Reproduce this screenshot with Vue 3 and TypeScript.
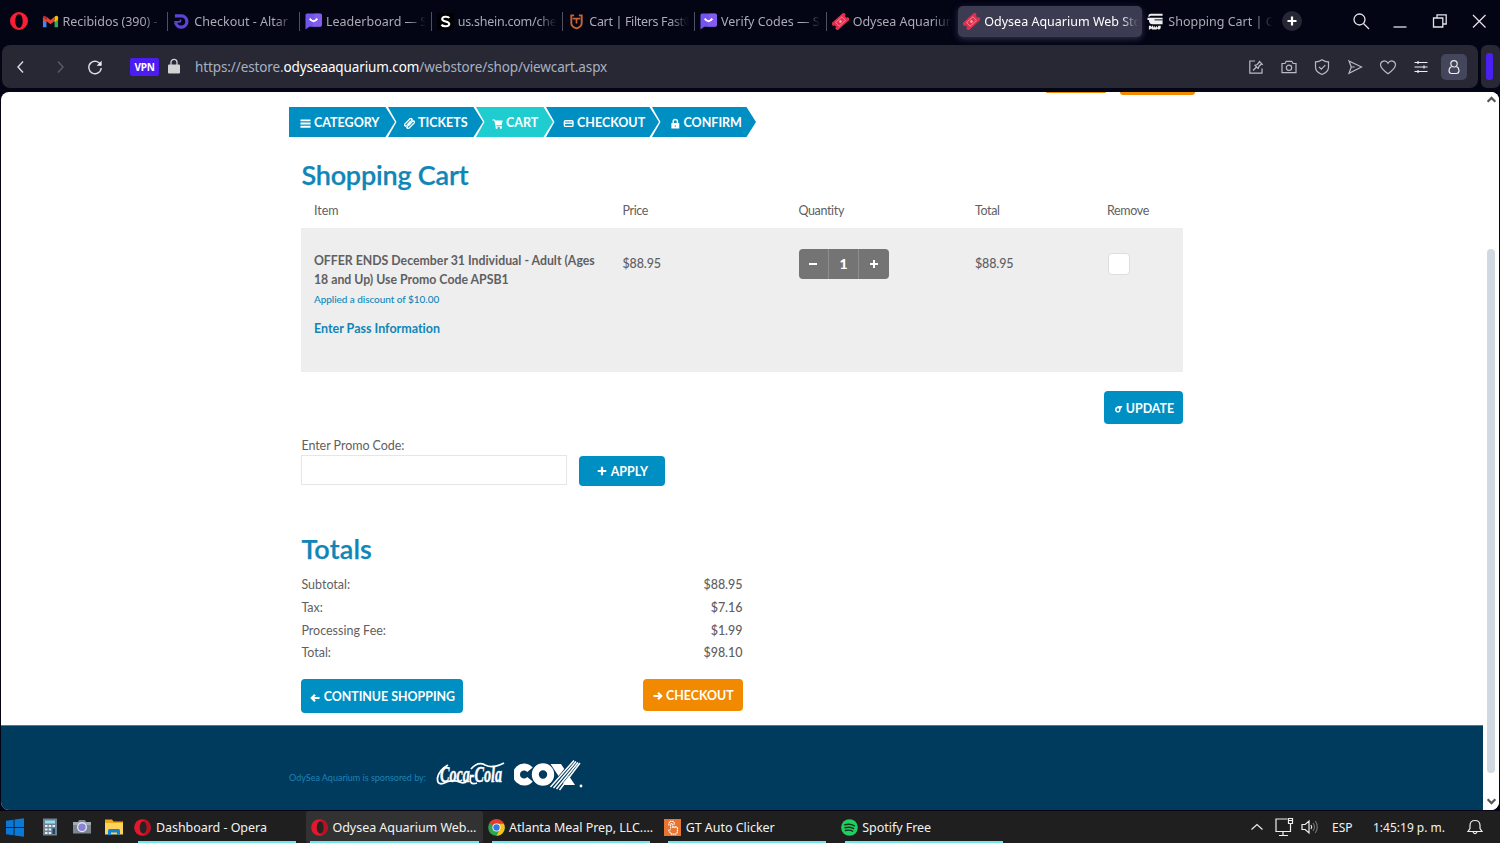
<script setup lang="ts">
interface Tab { icon: string; title: string; active?: boolean; cls?: string }
interface Step { label: string; icon: string; cls: string }
interface Task { icon: string; title: string; cls: string; active?: boolean }

const tabs: Tab[] = [
  { icon: 'gmail', title: 'Recibidos (390) -', cls: 't1' },
  { icon: 'altar', title: 'Checkout - Altar', cls: 't2' },
  { icon: 'chat', title: 'Leaderboard — S', cls: 't3' },
  { icon: 'shein', title: 'us.shein.com/che', cls: 't4' },
  { icon: 'filters', title: 'Cart | Filters Fast®', cls: 't5' },
  { icon: 'chat', title: 'Verify Codes — S', cls: 't6' },
  { icon: 'ticket', title: 'Odysea Aquarium', cls: 't7' },
  { icon: 'ticket', title: 'Odysea Aquarium Web Sto', active: true, cls: 't8' },
  { icon: 'raw', title: 'Shopping Cart | G', cls: 't9' },
]

const steps: Step[] = [
  { label: 'CATEGORY', icon: 'menu', cls: 's1' },
  { label: 'TICKETS', icon: 'ticket', cls: 's2' },
  { label: 'CART', icon: 'cart', cls: 's3' },
  { label: 'CHECKOUT', icon: 'card', cls: 's4' },
  { label: 'CONFIRM', icon: 'lock', cls: 's5' },
]

const totals = [
  { label: 'Subtotal:', value: '$88.95' },
  { label: 'Tax:', value: '$7.16' },
  { label: 'Processing Fee:', value: '$1.99' },
  { label: 'Total:', value: '$98.10' },
]

const tasks: Task[] = [
  { icon: 'opera', title: 'Dashboard - Opera', cls: 'k1' },
  { icon: 'opera', title: 'Odysea Aquarium Web...', cls: 'k2', active: true },
  { icon: 'chrome', title: 'Atlanta Meal Prep, LLC....', cls: 'k3' },
  { icon: 'click', title: 'GT Auto Clicker', cls: 'k4' },
  { icon: 'spotify', title: 'Spotify Free', cls: 'k5' },
]
</script>

<template>
  <div class="screen">
    <header class="tabstrip">
      <svg class="opera-menu" viewBox="0 0 18 18"><path fill-rule="evenodd" fill="#fa1e35" d="M9 0a9 9 0 1 0 0 18A9 9 0 0 0 9 0Zm0 2.200c2.200 0 3.700 2.900 3.700 6.800s-1.500 6.800-3.700 6.800S5.300 12.900 5.300 9 6.800 2.200 9 2.200Z" /></svg>
      <div v-for="(t, i) in tabs" :key="i" class="tab" :class="[t.cls, { active: t.active }]">
        <svg class="fav" viewBox="0 0 18 18">
          <g v-if="t.icon === 'gmail'">
            <path d="M1 4v11h3.700V8z" fill="#4285f4" /><path d="M17 4v11h-3.700V8z" fill="#34a853" />
            <path d="M1 4.500 4.700 7.500V4L3 3Q1 3 1 4.500Z" fill="#c5221f" /><path d="M4.700 4 9 7.500 13.300 4v4.500L9 12 4.700 8.500ZM1 4.500 4.700 7.300v3L1 7.300Z" fill="#ea4335" />
            <path d="M13.300 4 15 3q2 0 2 1.500V7l-3.700 2.700Z" fill="#fbbc04" />
          </g>
          <g v-else-if="t.icon === 'altar'" fill="none" stroke="#5a45d8" stroke-width="3.400">
            <path d="M2 3h7a6 6 0 1 1-6.200 7.200" /><path d="M8 7v1q0 1.500-1.500 1.500H1.300" stroke-width="1.800" />
          </g>
          <g v-else-if="t.icon === 'chat'">
            <path d="M2 .5h14q2 0 2 2v10q0 2-2 2H4.500L.5 17.500V2.500q0-2 1.500-2Z" fill="#7354ee" />
            <path d="M10 .5h6q2 0 2 2v10q0 2-2 2H8Z" fill="#8d61ee" opacity=".6" />
            <path d="M5 6q4 5.500 8 0" stroke="#fff" stroke-width="2" fill="none" />
          </g>
          <g v-else-if="t.icon === 'shein'">
            <rect width="18" height="18" fill="#000" /><path d="M13 5.300C12 3.500 5.500 3.200 5.500 6.300c0 3.500 7.500 1.700 7.500 5.300 0 3-6.700 3.300-8.200.7" fill="none" stroke="#fff" stroke-width="2.200" />
          </g>
          <g v-else-if="t.icon === 'filters'" fill="none" stroke="#c86432" stroke-width="2">
            <path d="M6.500 2.500H3.500v8.300Q3.500 14.500 9 16.300q5.500-1.800 5.500-5.500V2.500h-3" /><path d="M9 5.500V11M5 6h8" stroke-width="1.800" />
          </g>
          <g v-else-if="t.icon === 'ticket'" transform="rotate(-42 9 9)">
            <path d="M0 4h18v3.300a1.700 1.700 0 0 0 0 3.400V14H0v-3.300a1.700 1.700 0 0 0 0-3.400Z" fill="#e02f4e" />
            <path d="M4.500 6.300h9v5.400h-9z" fill="none" stroke="#f595a3" stroke-width=".8" /><circle cx="9" cy="9" r="1.400" fill="#f7a2ad" />
          </g>
          <g v-else fill="#eee">
            <path d="M4 .8h12.500v2H4Q2.500 3 2.500 4H1.300Q1.500 1 4 .8ZM.5 5h16v7H6Q2 12 2 7.500H.5Z" />
            <path d="M8 6.800h8.500v1H8z" fill="#030414" />
            <path d="M2 17.500v-4h2l.6 1.500.7-1.500h1l.9 2.200.9-2.200 1 2.200 1-2.200 1 2.200.9-2.200h2.500v2.700l-1.500 1.300h-1l-.9-1.200-.9 1.200H5.500l-1-1.200L3 17.500Z" />
          </g>
        </svg>
        <span class="tab-title">{{ t.title }}</span>
      </div>
      <div class="newtab"><svg viewBox="0 0 20 20"><path d="M10 5.500v9M5.500 10h9" stroke="#fff" stroke-width="2.200" /></svg></div>
      <svg class="win search" viewBox="0 0 18 18"><circle cx="7.500" cy="7.500" r="5.500" /><path d="m11.500 11.500 5.500 5.500" /></svg>
      <svg class="win min" viewBox="0 0 18 18"><path d="M2.500 15h13" /></svg>
      <svg class="win restore" viewBox="0 0 18 18"><path d="M2.500 6h9.300v9H2.500zM6 6V2.800h9.200V12H12" /></svg>
      <svg class="win close" viewBox="0 0 18 18"><path d="m3 3 12.500 12.500M15.500 3 3 15.500" /></svg>
    </header>

    <div class="toolrow">
      <div class="toolbar">
        <svg class="nav back" viewBox="0 0 18 18"><path d="m11 3.500-5 5.500 5 5.500" /></svg>
        <svg class="nav fwd" viewBox="0 0 18 18"><path d="m6 3.500 5 5.500-5 5.500" /></svg>
        <svg class="nav reload" viewBox="0 0 18 18"><path d="M14.800 7.200A6.200 6.200 0 1 0 15.200 10" /><path d="M15.600 2.800v5h-5z" fill="#f0f0f4" stroke="none" /></svg>
        <span class="vpn">VPN</span>
        <svg class="padlock" viewBox="0 0 12 16"><path d="M3 7V4.300a3 3 0 0 1 6 0V7" fill="none" stroke="#d2d2d4" stroke-width="1.300" /><rect y="6.500" width="12" height="9" rx="1" fill="#d2d2d4" /></svg>
        <span class="url">https://estore.<b>odyseaaquarium.com</b>/webstore/shop/viewcart.aspx</span>
        <div class="actions">
          <svg viewBox="0 0 18 18"><path d="M8 3H2.800v12.200H15V10.500M6 12.500 9.500 9M7.500 6.800l4 4M8.200 7.200l2-.7 2.300-2.500M11.300 10.200l.7-2L14.500 6M12 3 15.800 6.800" /></svg>
          <svg viewBox="0 0 18 18"><path d="M2 5.500h3l1.200-2.200h5.600L13 5.500h3v9.200H2z" /><circle cx="9" cy="9.800" r="2.700" /></svg>
          <svg viewBox="0 0 18 18"><path d="M9 1.700Q12.500 4 15.500 3.800v5.400q0 4.500-6.500 7.300-6.500-2.800-6.500-7.300V3.800Q5.500 4 9 1.700ZM6 8.800l2.300 2.300 4-4" /></svg>
          <svg viewBox="0 0 18 18"><path d="m3 3 12.500 6L3 15.200 5.300 9ZM5.300 9h3.500" /></svg>
          <svg viewBox="0 0 18 18"><path d="M9 15.800C4.500 12.500 1.500 10 1.500 6.800c0-4.200 5.500-5.300 7.500-1.500 2-3.800 7.500-2.700 7.500 1.500 0 3.200-3 5.700-7.500 9Z" /></svg>
          <svg class="bright" viewBox="0 0 18 18"><path d="M2.500 4.500h13M2.500 9h13M2.500 13.500h13M6 3v3M12 7.500v3M6 12v3" /></svg>
          <span class="profile"><svg class="bright" viewBox="0 0 18 18"><circle cx="9" cy="5.800" r="3.200" /><path d="M6.500 8.500Q4 9.800 4 12.500q0 3 2.500 3h5q2.500 0 2.500-3 0-2.700-2.500-4" /></svg></span>
        </div>
      </div>
      <div class="side"><i></i></div>
    </div>

    <div class="viewport">
      <div class="page">
        <main class="content">
          <div class="cut cut-a"></div>
          <div class="cut cut-b"></div>
          <ol class="steps">
            <li v-for="s in steps" :key="s.label" :class="s.cls">
              <svg viewBox="0 0 12 12">
                <path v-if="s.icon === 'menu'" d="M.5 2.500h11M.5 6h11M.5 9.500h11" stroke="#fff" stroke-width="2" />
                <g v-else-if="s.icon === 'ticket'" fill="none" stroke="#fff" stroke-width="1.500" transform="rotate(-45 6 6)"><path d="M.8 2.800h10.400v2a1.200 1.200 0 0 0 0 2.400v2H.8v-2a1.200 1.200 0 0 0 0-2.400ZM3.800 5.200h4.400v1.600H3.800z" /></g>
                <g v-else-if="s.icon === 'cart'" fill="#fff"><path d="M.5 1.500h2.700l.5 1.300h8L10.500 7.500H4.800L5 8.500h5.800v1H4L2.500 2.800h-2Z" /><circle cx="5" cy="10.700" r="1.200" /><circle cx="9.700" cy="10.700" r="1.200" /></g>
                <path v-else-if="s.icon === 'card'" d="M2.500 3h7.400q1 0 1 1v4.200q0 1-1 1H2.500q-1 0-1-1V4q0-1 1-1ZM1.500 5.700h9.400" stroke="#fff" stroke-width="1.500" fill="none" />
                <g v-else><path d="M3.500 6V4a2.300 2.300 0 0 1 4.600 0v2" fill="none" stroke="#fff" stroke-width="1.600" /><path d="M1.500 5.500h8.600v6H1.500z" fill="#fff" /><path d="M5.300 8h1v1.500h-1z" fill="#008fc3" /></g>
              </svg>
              <span>{{ s.label }}</span>
            </li>
          </ol>

          <h1>Shopping Cart</h1>
          <div class="grid head">
            <span>Item</span><span>Price</span><span>Quantity</span><span>Total</span><span>Remove</span>
          </div>
          <div class="grid item">
            <div class="desc">
              <strong><span>OFFER ENDS December 31 Individual - Adult (Ages</span><br /><span>18 and Up) Use Promo Code APSB1</span></strong>
              <small>Applied a discount of $10.00</small>
              <a>Enter Pass Information</a>
            </div>
            <span class="money">$88.95</span>
            <div class="qty">
              <button><svg viewBox="0 0 10 10"><path d="M1 5h8" /></svg></button><span>1</span><button><svg viewBox="0 0 10 10"><path d="M1 5h8M5 1v8" /></svg></button>
            </div>
            <span class="money">$88.95</span>
            <div class="check"></div>
          </div>
          <button class="btn update">
            <svg viewBox="0 0 10 10"><path d="M6.500 3.500H4.600a2 2.200 0 1 0 2.200 2.200V4.500M5.500 2.800h2.800L6.800 5Z" fill="none" stroke="#fff" stroke-width="1.400" /></svg><span>UPDATE</span>
          </button>

          <label class="promo-label">Enter Promo Code:</label>
          <div class="promo">
            <input type="text" />
            <button class="btn apply"><svg viewBox="0 0 10 10"><path d="M.7 5h8.600M5 .7v8.600" stroke="#fff" stroke-width="2.200" /></svg><span>APPLY</span></button>
          </div>

          <h2>Totals</h2>
          <dl>
            <div v-for="r in totals" :key="r.label"><dt>{{ r.label }}</dt><dd>{{ r.value }}</dd></div>
          </dl>
          <div class="buttons">
            <button class="btn cont"><svg viewBox="0 0 10 10"><path d="M9.500 5H2M5 1.800 1.800 5 5 8.200" fill="none" stroke="#fff" stroke-width="2.200" /></svg><span>CONTINUE SHOPPING</span></button>
            <button class="btn out"><svg viewBox="0 0 10 10"><path d="M.5 5H8M5 1.800 8.200 5 5 8.200" fill="none" stroke="#fff" stroke-width="2.200" /></svg><span>CHECKOUT</span></button>
          </div>
        </main>
        <footer>
          <span class="sponsor">OdySea Aquarium is sponsored by:</span>
          <svg class="coke" viewBox="0 0 70 34">
            <text x="4" y="24" textLength="62" lengthAdjust="spacingAndGlyphs" font-family="Liberation Serif, serif" font-style="italic" font-weight="700" font-size="24" fill="#fff" stroke="#fff" stroke-width=".5">Coca-Cola</text>
            <path d="M12 7Q3 12 1.500 20q-.5 7 5.500 5.500 8-4.500 15-2 6 3 9-.5M35 11q7-8 14-4 8 4 19-2M35 17q-3 11 6 8" fill="none" stroke="#fff" stroke-width="1.800" />
          </svg>
          <svg class="cox" viewBox="0 0 70 34">
            <g fill="none" stroke="#fff" stroke-width="7"><path d="M16 11.700A7.600 7.600 0 1 0 16 21.300" /><circle cx="29" cy="16.500" r="7.700" /></g>
            <path d="M36.500 6H47l14 21H50.500z" fill="#fff" />
            <path d="M39 31 62 3" stroke="#003a5d" stroke-width="8" />
            <path d="M36.500 29 60 2.500M39.500 30 62 3.500M42.500 31 64 4.500M45.500 32 66 5" stroke="#fff" stroke-width="1.500" />
            <circle cx="67" cy="28" r="1.400" fill="#fff" />
          </svg>
        </footer>
      </div>
      <div class="scroll">
        <svg viewBox="0 0 10 8"><path d="M1.500 6 5 2.500 8.500 6" /></svg>
        <i></i>
        <svg viewBox="0 0 10 8"><path d="M1.500 2 5 5.500 8.500 2" /></svg>
      </div>
    </div>

    <nav class="taskbar">
      <svg class="start" viewBox="0 0 20 20"><path d="M.5 3 8.500 1.800V9.400H.5zM9.500 1.600 19.500.2V9.400H9.500zM.5 10.400h8v7.700L.5 17zM9.500 10.400h10v9.300l-10-1.400z" fill="#0a78d6" /></svg>
      <svg class="app a1" viewBox="0 0 18 18"><rect x="2" y=".5" width="14" height="17" fill="#71818e" /><path d="M4 2.500h10v3H4z" fill="#8ee0f2" /><path d="M4 7h2.500v2H4zM7.700 7h2.500v2H7.700zM11.500 7H14v2h-2.500zM4 10.500h2.500v2H4zM7.700 10.500h2.500v2H7.700zM4 14h2.500v2H4zM7.700 14h2.500v2H7.700z" fill="#e5eef3" /><path d="M11.500 10.500H14V16h-2.500z" fill="#124b78" /></svg>
      <svg class="app a2" viewBox="0 0 18 18"><path d="M0 4h5l1-2h6l1 2h5v11.500H0z" fill="#7d8790" /><path d="M0 4h18v3H0z" fill="#a3abb3" /><circle cx="9" cy="9.300" r="5" fill="#e5e9f0" /><circle cx="9" cy="9.300" r="3.700" fill="#8b83d8" /></svg>
      <svg class="app a3" viewBox="0 0 18 18"><path d="M0 1.500h7l1.500 2H18V16H0z" fill="#e9a91c" /><path d="M0 5h18v11.500H0z" fill="#ffd35b" /><path d="M3 17v-4.500Q3 11 4.500 11h9q1.500 0 1.500 1.500V17h-3v-2.500H6V17Z" fill="#1583d4" /></svg>
      <div v-for="k in tasks" :key="k.title" class="task" :class="[k.cls, { active: k.active }]">
        <svg viewBox="0 0 18 18">
          <g v-if="k.icon === 'opera'"><circle cx="9" cy="9" r="8.800" fill="#e4172e" /><path d="M11 .5a8.800 8.800 0 0 1 0 17Z" fill="#b51222" /><ellipse cx="9.700" cy="9" rx="3.600" ry="6.500" fill="#242424" /></g>
          <g v-else-if="k.icon === 'chrome'"><circle cx="9" cy="9" r="8.800" fill="#2ea44f" /><path d="M9 9 1.400 4.600A8.800 8.800 0 0 1 16.600 4.600Z" fill="#e33b2e" /><path d="M9 5h7.800A8.800 8.800 0 0 1 9 17.800L12.500 11Z" fill="#fbc116" /><circle cx="9" cy="9" r="4.300" fill="#fff" /><circle cx="9" cy="9" r="3.400" fill="#3578e5" /></g>
          <g v-else-if="k.icon === 'click'"><rect width="18" height="18" fill="#e87431" /><path d="M7 10V5.500q1.200-1.500 2.300 0V9h1.500v-.8q1.200-.5 1.700.5 1.700-.5 1.700 1V13q0 2.800-2.500 3H8L5 12.500q0-1.600 2-1M5.200 7V4.500L6.500 2.500h3.200L11 4.500V6" fill="none" stroke="#fff" stroke-width="1.200" stroke-dasharray="1.800 .5" /></g>
          <g v-else><circle cx="9" cy="9" r="8.800" fill="#1ed15e" /><path d="M3.800 6.200q5.700-1.600 10.500 1M4.200 9.300q5-1.400 9.200.9M4.700 12.200q4.200-1.100 7.600.7" fill="none" stroke="#1c3022" stroke-width="1.500" stroke-linecap="round" /></g>
        </svg>
        <span>{{ k.title }}</span>
      </div>
      <div class="tray">
        <svg class="y1" viewBox="0 0 14 14"><path d="m1.500 9.500 5.500-5 5.500 5" /></svg>
        <svg class="y2" viewBox="0 0 20 20"><path d="M13.500 2H2v12.500h14.500V9M9 14.500V18M5 18.500h9M14.500 1.500h4v5h-4zM15 3.500h3M16.500 6.500V9" /></svg>
        <svg class="y3" viewBox="0 0 18 18"><path d="M1 6.500h3.200L8 3v12l-3.800-3.500H1ZM10 7q1.500 2 0 4" /><path d="M12 5q3 4 0 8M14.300 3q4 6 0 12" opacity=".4" /></svg>
        <span class="lang">ESP</span>
        <span class="clock">1:45:19 p. m.</span>
        <svg class="y4" viewBox="0 0 18 18"><path d="M2 13.500h14L14 10.500V7.500Q14 2.500 9 2.500T4 7.500v3ZM7 14q2 3.500 4 0" /></svg>
      </div>
    </nav>
  </div>
</template>

<style>
html, body { overflow: hidden; background: #030414; }
</style>

<style scoped>
* { box-sizing: border-box; }
svg { display: block; flex: none; }
button { border: 0; padding: 0; font: inherit; color: inherit; }
.screen { width: 1500px; height: 843px; background: #030414; font-family: "Noto Sans", "Open Sans", sans-serif; overflow: hidden; display: flex; flex-direction: column; }

.tabstrip { height: 45px; display: flex; align-items: center; padding-bottom: 3px; }
.opera-menu { width: 18px; height: 18px; margin-left: 10px; }
.tab { width: 131.700px; height: 31px; flex: none; display: flex; align-items: center; padding-left: 6px; position: relative; color: #aaabb4; font-size: 12.500px; white-space: nowrap; }
.t1 { margin-left: 7.600px; }
.tab:not(.active):not(.t1):not(.t9)::before { content: ""; position: absolute; left: 0; top: 6px; width: 1px; height: 19px; background: #50515e; }
.fav { width: 17px; height: 17px; margin-right: 4px; }
.tab-title { flex: 1; overflow: hidden; margin-right: 4px; padding-top: 1px; line-height: 20px; -webkit-mask-image: linear-gradient(90deg, #000 calc(100% - 20px), transparent 99%); mask-image: linear-gradient(90deg, #000 calc(100% - 20px), transparent 99%); }
.t1 .tab-title { letter-spacing: -.05px; }
.t4 .tab-title { letter-spacing: -.25px; }
.t5 .tab-title { letter-spacing: -.34px; }
.t7 .tab-title { letter-spacing: -.05px; }
.tab.active { width: 184px; background: #3b3c51; border-radius: 5px; color: #fff; padding-left: 5px; margin-left: .9px; box-shadow: 0 2px 6px #30314a; }
.tab.active .tab-title { margin-right: 2px; }
.t9 { padding-left: 5px; width: 132px; }
.t9 .tab-title { margin-right: 0; }
.newtab { width: 20px; height: 20px; border-radius: 50%; background: #262735; margin-left: 8px; flex: none; }
.win { width: 18px; height: 18px; fill: none; stroke: #e2e2e8; stroke-width: 1.300; }
.search { margin-left: 50px; }
.min { margin-left: 21px; }
.restore { margin-left: 22px; }
.close { margin-left: 21px; }

.toolrow { display: flex; height: 43px; padding-left: 2px; gap: 3px; flex: none; }
.toolbar { width: 1476px; background: #272834; border-radius: 8px; display: flex; align-items: center; flex: none; }
.side { width: 19px; background: #272834; border-radius: 6px; display: flex; justify-content: center; align-items: center; }
.side i { width: 7px; height: 27px; border-radius: 3px; background: #4a20f2; margin-right: 2px; }
.nav { width: 18px; height: 18px; fill: none; stroke: #dcdce2; stroke-width: 1.400; }
.back { margin-left: 10px; }
.fwd { margin-left: 22px; stroke: #5b5c68; }
.reload { margin-left: 16px; }
.vpn { margin-left: 26px; width: 29px; height: 18px; border-radius: 2px; background: #4b1df0; color: #fff; font-size: 10px; letter-spacing: -.2px; font-weight: 700; line-height: 18px; text-align: center; }
.padlock { width: 12px; height: 16px; margin-left: 9px; margin-bottom: 2px; }
.url { margin-left: 15px; font-size: 13.500px; letter-spacing: -.11px; color: #a9b1c0; white-space: nowrap; }
.url b { font-weight: 400; color: #fff; }
.actions { margin-left: auto; margin-right: 11.500px; display: flex; align-items: center; gap: 15px; }
.actions svg { width: 18px; height: 18px; fill: none; stroke: #b9bac4; stroke-width: 1.200; }
.actions .bright { stroke: #ececf2; }
.profile { width: 26px; height: 26px; margin-left: -4px; border-radius: 5px; background: #44465c; display: flex; align-items: center; justify-content: center; }

.viewport { margin: 4px 1px 0; height: 718px; background: #fff; border-radius: 8px; overflow: hidden; display: flex; flex: none; }
.page { width: 1482px; display: flex; flex-direction: column; font-family: Lato, sans-serif; color: #5f6062; font-size: 12.500px; font-variant-ligatures: none; }
.content { position: relative; height: 633px; padding-left: 300.400px; }
.cut { position: absolute; top: 0; background: #f18a00; border-radius: 0 0 4px 4px; }
.cut-a { left: 1045px; width: 60px; height: 1px; }
.cut-b { left: 1119px; width: 75px; height: 3px; }
.steps { list-style: none; margin: 15px 0 0 -12.400px; padding: 0; display: flex; height: 30px; color: #fff; font-weight: 700; font-size: 12.500px; }
.steps li { background: #008fc3; display: flex; align-items: center; flex: none; clip-path: polygon(0 0, calc(100% - 9.500px) 0, 100% 50%, calc(100% - 9.500px) 100%, 0 100%, 8.500px 50%); margin-left: -7px; white-space: nowrap; }
.steps svg { width: 11px; height: 11px; margin-top: 3px; margin-right: 3px; }
.steps .s1 { width: 106px; margin-left: 0; padding-left: 11px; clip-path: polygon(0 0, calc(100% - 9.500px) 0, 100% 50%, calc(100% - 9.500px) 100%, 0 100%); }
.steps .s2 { width: 95px; padding-left: 16px; }
.steps .s3 { width: 77px; padding-left: 16px; background: #1fcdd1; }
.steps .s4 { width: 113px; padding-left: 17px; }
.steps .s5 { width: 104px; padding-left: 17.500px; }
h1, h2 { margin: 0; font-size: 27px; line-height: 36px; font-weight: 600; color: #1086b7; white-space: nowrap; -webkit-text-stroke: .25px #1086b7; }
h1 { margin-top: 20px; letter-spacing: -.2px; }
.grid { width: 882px; display: grid; grid-template-columns: 308.500px 176px 176.500px 132px 1fr; padding-left: 12.500px; }
.head { height: 35px; line-height: 35px; letter-spacing: -.35px; }
.head span:first-child { letter-spacing: 0; }
.item { height: 143.500px; background: #eee; }
.desc { padding-top: 23px; white-space: nowrap; }
.desc strong { display: block; font-weight: 700; font-size: 12.300px; line-height: 19px; }
.desc small { display: block; font-size: 10px; line-height: 14px; margin-top: 3px; color: #0e86b8; font-weight: 500; letter-spacing: -.05px; }
.desc a { display: block; margin-top: 14px; line-height: 18px; font-weight: 700; color: #1086b7; font-size: 12.500px; }
.money { padding-top: 26px; line-height: 20px; font-weight: 500; font-size: 12.500px; letter-spacing: -.1px; }
.qty { margin: 20.500px 0 0 .6px; width: 90px; height: 30px; background: #747474; border-radius: 4px; display: grid; grid-template-columns: 29px 31px 30px; color: #fff; font-weight: 900; font-size: 14px; text-align: center; line-height: 30px; overflow: hidden; }
.qty span { border-left: 1px solid #8d8d8d; border-right: 1px solid #8d8d8d; }
.qty button { background: none; display: flex; align-items: center; justify-content: center; }
.qty svg { width: 10px; height: 10px; stroke: #fff; stroke-width: 2; }
.check { width: 22px; height: 22px; margin: 25px 0 0 1.400px; background: #fff; border: 1px solid #dedede; border-radius: 4px; }
.btn { display: flex; align-items: center; justify-content: center; background: #008fc3; color: #fff; border-radius: 4px; font-weight: 700; font-size: 12.400px; white-space: nowrap; }
.btn svg { width: 10px; height: 10px; margin-right: 3px; margin-top: 2px; }
.update { width: 79px; height: 33px; margin: 19.500px 0 0 802.600px; padding-top: 1px; }
.promo-label { display: block; margin-top: 12px; line-height: 19px; letter-spacing: -.05px; }
.promo { display: flex; gap: 12px; }
.promo input { width: 266px; height: 30px; border: 1px solid #e6e6e6; background: #fff; padding: 0; }
.apply { width: 86px; height: 30px; margin-top: 1px; }
.apply svg { margin: 0 4px 0 0; }
h2 { margin-top: 45px; letter-spacing: .15px; }
dl { margin: 7px 0 0; width: 441px; }
dl div { display: flex; justify-content: space-between; line-height: 22.800px; }
dd { margin: 0; font-weight: 500; letter-spacing: -.05px; }
.buttons { margin-top: 14px; width: 442px; display: flex; justify-content: space-between; align-items: flex-start; }
.cont { width: 162px; height: 34px; padding-top: 1px; }
.cont svg { margin-right: 4px; }
.out { width: 100px; height: 32px; background: #f18a00; }
footer { height: 85px; background: #003a5d; border-top: 1px solid #2b8aa8; padding: 14px 0 0 288px; display: flex; align-items: center; }
.sponsor { font-size: 9px; color: #1d84b4; width: 147px; white-space: nowrap; margin-top: 5px; }
.coke { width: 70px; height: 34px; }
.cox { width: 70px; height: 34px; margin-left: 8px; }
.scroll { flex: 1; display: flex; flex-direction: column; align-items: center; background: #fff; padding-top: 3px; }
.scroll svg { width: 11px; height: 9px; fill: none; stroke: #55565a; stroke-width: 2; }
.scroll i { width: 8px; height: 524px; border-radius: 4px; background: #d0d8e2; margin: 145px 0 24px; }

.taskbar { height: 32px; margin-top: 1px; background: #1f1f1f; display: flex; align-items: center; color: #f2f2f2; font-size: 12.500px; white-space: nowrap; flex: none; }
.start { width: 20px; height: 19px; margin-left: 5px; }
.app { width: 18px; height: 18px; }
.a1 { margin-left: 16px; }
.a2 { margin-left: 14px; }
.a3 { margin-left: 14px; }
.task { width: 176.600px; height: 32px; display: flex; align-items: center; padding-left: 5px; position: relative; flex: none; letter-spacing: -.04px; }
.k1 { margin-left: 6.400px; }
.task svg { width: 17px; height: 17px; margin-right: 4.500px; }
.task::after { content: ""; position: absolute; left: 9px; right: 9.500px; bottom: 0; height: 2px; background: #71e5e8; }
.task.active { background: #323232; border-radius: 3px; }
.task.active::after { left: 4px; right: 4px; }
.tray { margin-left: auto; display: flex; align-items: center; }
.tray svg { fill: none; stroke: #eee; stroke-width: 1.200; }
.y1 { width: 14px; height: 14px; }
.y2 { width: 20px; height: 20px; margin-left: 10px; }
.y3 { width: 18px; height: 18px; margin-left: 7px; }
.lang { margin-left: 13px; width: 41px; font-size: 12px; }
.clock { width: 86px; font-size: 12px; }
.y4 { width: 18px; height: 18px; margin-left: 7px; margin-right: 16px; }
</style>
